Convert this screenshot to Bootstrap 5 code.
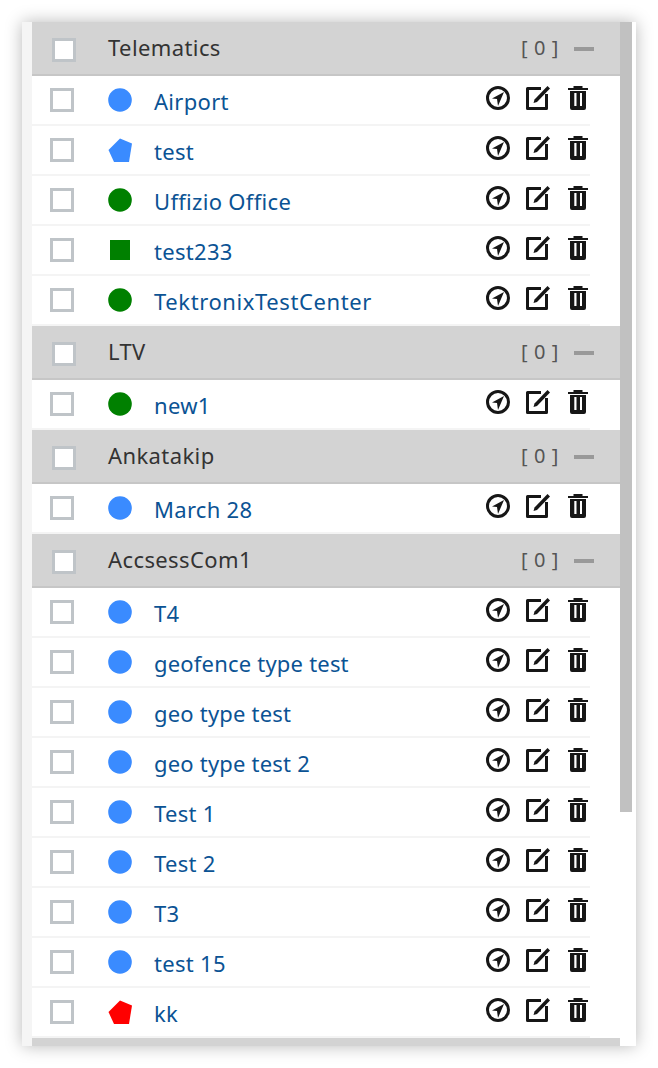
<!DOCTYPE html>
<html lang="en"><head><meta charset="utf-8"><title>Geofences</title>
<link href="https://cdn.jsdelivr.net/npm/bootstrap@5.3.0/dist/css/bootstrap.min.css" rel="stylesheet">
<style>
html,body{height:1068px;overflow:hidden;background:#fff}
body{font-family:"Noto Sans","Open Sans",sans-serif;font-size:22px;letter-spacing:.3px;padding:22px}
.geo-panel{width:614px;height:1024px;padding-left:10px;background:#f5f5f5;box-shadow:0 0 16px rgba(0,0,0,.28);overflow:hidden}
.geo-inner{background:#fff;height:100%}
.geo-list{width:588px;height:100%;background:#d3d3d3}
.geo-scroll{width:12px;height:790px;background:#c1c1c1}
.geo-head{height:54px;background:#d3d3d3;border-bottom:2px solid #c6c6c6;color:#333}
.geo-check{width:24px;height:24px;border:3px solid #bfc4c8;background:#fff;flex:none}
.geo-head .geo-check{margin-left:20px;margin-top:4px}
.geo-name{margin-left:32px;margin-top:-2px;letter-spacing:.4px}
.geo-count{color:#555;letter-spacing:.6px;margin-top:0;font-size:20px}
.geo-dash{width:20px;height:4px;background:#999;margin:2px 26px 0 15px;flex:none}
.geo-row{height:50px;background:#fff;width:100%}
.geo-rowin{width:558px;height:50px;border-bottom:2px solid #f4f4f4}
.geo-rowin>.geo-check{margin-left:18px}
.geo-shape{width:24px;height:24px;margin-left:34px;flex:none;display:block}
.geo-link{color:#0b5394;margin-left:22px;margin-top:2px;text-decoration:none}
.geo-tools{margin-left:auto;gap:16px;margin-top:-4px}
.geo-tools svg{width:24px;height:24px;display:block;color:#161616}
.geo-wide{letter-spacing:.6px}
.geo-tight{letter-spacing:.2px}
</style></head><body>
<svg width="0" height="0" class="position-absolute">
<defs>
<symbol id="i-nav" viewBox="0 0 24 24"><circle cx="12" cy="12" r="10.500" fill="none" stroke="currentColor" stroke-width="3"/><path d="M18 6 6 12.500 11 13 12 20z" fill="currentColor"/></symbol>
<symbol id="i-edit" viewBox="0 0 24 24"><path d="M15 2.500H1.500V22.500H20.500V8" fill="none" stroke="currentColor" stroke-width="3" stroke-linejoin="round"/><path d="M21.500 0 24 2.500 11 16 7.500 17 8.500 13.500z" fill="currentColor"/></symbol>
<symbol id="i-del" viewBox="0 0 24 24"><path d="M2 2H7.500V0H16.500V2H22V4H2z" fill="currentColor"/><path fill-rule="evenodd" d="M4 5H20V22A2 2 0 0 1 18 24H6A2 2 0 0 1 4 22zM8.300 7V20H10.500V7zM14 7V20H16V7z" fill="currentColor"/></symbol>
<symbol id="s-c-b" viewBox="0 0 24 24"><circle cx="12" cy="12" r="11.800" fill="#3a8bff"/></symbol>
<symbol id="s-c-g" viewBox="0 0 24 24"><circle cx="12" cy="12" r="11.800" fill="#008000"/></symbol>
<symbol id="s-sq" viewBox="0 0 24 24"><rect x="2" y="2" width="20" height="20" fill="#008000"/></symbol>
<symbol id="s-p-b" viewBox="0 0 24 24"><path d="M12 .5 24 5.500 21 24 6 24 .5 12z" fill="#3a8bff"/></symbol>
<symbol id="s-p-r" viewBox="0 0 24 24"><path d="M12 .5 24 5.500 21 24 6 24 .5 12z" fill="#ff0000"/></symbol>
</defs></svg>
<div class="geo-panel"><div class="geo-inner d-flex">
<div class="geo-list">

<div class="geo-head d-flex align-items-center"><span class="geo-check"></span><span class="geo-name">Telematics</span><span class="geo-count ms-auto">[ 0 ]</span><span class="geo-dash"></span></div>
<div class="geo-row"><div class="geo-rowin d-flex align-items-center"><span class="geo-check"></span><svg class="geo-shape"><use href="#s-c-b"/></svg><a class="geo-link" href="#">Airport</a><div class="geo-tools d-flex"><svg><use href="#i-nav"/></svg><svg><use href="#i-edit"/></svg><svg><use href="#i-del"/></svg></div></div></div>
<div class="geo-row"><div class="geo-rowin d-flex align-items-center"><span class="geo-check"></span><svg class="geo-shape"><use href="#s-p-b"/></svg><a class="geo-link" href="#">test</a><div class="geo-tools d-flex"><svg><use href="#i-nav"/></svg><svg><use href="#i-edit"/></svg><svg><use href="#i-del"/></svg></div></div></div>
<div class="geo-row"><div class="geo-rowin d-flex align-items-center"><span class="geo-check"></span><svg class="geo-shape"><use href="#s-c-g"/></svg><a class="geo-link" href="#">Uffizio Office</a><div class="geo-tools d-flex"><svg><use href="#i-nav"/></svg><svg><use href="#i-edit"/></svg><svg><use href="#i-del"/></svg></div></div></div>
<div class="geo-row"><div class="geo-rowin d-flex align-items-center"><span class="geo-check"></span><svg class="geo-shape"><use href="#s-sq"/></svg><a class="geo-link" href="#">test233</a><div class="geo-tools d-flex"><svg><use href="#i-nav"/></svg><svg><use href="#i-edit"/></svg><svg><use href="#i-del"/></svg></div></div></div>
<div class="geo-row"><div class="geo-rowin d-flex align-items-center"><span class="geo-check"></span><svg class="geo-shape"><use href="#s-c-g"/></svg><a class="geo-link geo-wide" href="#">TektronixTestCenter</a><div class="geo-tools d-flex"><svg><use href="#i-nav"/></svg><svg><use href="#i-edit"/></svg><svg><use href="#i-del"/></svg></div></div></div>

<div class="geo-head d-flex align-items-center"><span class="geo-check"></span><span class="geo-name">LTV</span><span class="geo-count ms-auto">[ 0 ]</span><span class="geo-dash"></span></div>
<div class="geo-row"><div class="geo-rowin d-flex align-items-center"><span class="geo-check"></span><svg class="geo-shape"><use href="#s-c-g"/></svg><a class="geo-link" href="#">new1</a><div class="geo-tools d-flex"><svg><use href="#i-nav"/></svg><svg><use href="#i-edit"/></svg><svg><use href="#i-del"/></svg></div></div></div>

<div class="geo-head d-flex align-items-center"><span class="geo-check"></span><span class="geo-name">Ankatakip</span><span class="geo-count ms-auto">[ 0 ]</span><span class="geo-dash"></span></div>
<div class="geo-row"><div class="geo-rowin d-flex align-items-center"><span class="geo-check"></span><svg class="geo-shape"><use href="#s-c-b"/></svg><a class="geo-link" href="#">March 28</a><div class="geo-tools d-flex"><svg><use href="#i-nav"/></svg><svg><use href="#i-edit"/></svg><svg><use href="#i-del"/></svg></div></div></div>

<div class="geo-head d-flex align-items-center"><span class="geo-check"></span><span class="geo-name">AccsessCom1</span><span class="geo-count ms-auto">[ 0 ]</span><span class="geo-dash"></span></div>
<div class="geo-row"><div class="geo-rowin d-flex align-items-center"><span class="geo-check"></span><svg class="geo-shape"><use href="#s-c-b"/></svg><a class="geo-link" href="#">T4</a><div class="geo-tools d-flex"><svg><use href="#i-nav"/></svg><svg><use href="#i-edit"/></svg><svg><use href="#i-del"/></svg></div></div></div>
<div class="geo-row"><div class="geo-rowin d-flex align-items-center"><span class="geo-check"></span><svg class="geo-shape"><use href="#s-c-b"/></svg><a class="geo-link geo-tight" href="#">geofence type test</a><div class="geo-tools d-flex"><svg><use href="#i-nav"/></svg><svg><use href="#i-edit"/></svg><svg><use href="#i-del"/></svg></div></div></div>
<div class="geo-row"><div class="geo-rowin d-flex align-items-center"><span class="geo-check"></span><svg class="geo-shape"><use href="#s-c-b"/></svg><a class="geo-link geo-tight" href="#">geo type test</a><div class="geo-tools d-flex"><svg><use href="#i-nav"/></svg><svg><use href="#i-edit"/></svg><svg><use href="#i-del"/></svg></div></div></div>
<div class="geo-row"><div class="geo-rowin d-flex align-items-center"><span class="geo-check"></span><svg class="geo-shape"><use href="#s-c-b"/></svg><a class="geo-link geo-tight" href="#">geo type test 2</a><div class="geo-tools d-flex"><svg><use href="#i-nav"/></svg><svg><use href="#i-edit"/></svg><svg><use href="#i-del"/></svg></div></div></div>
<div class="geo-row"><div class="geo-rowin d-flex align-items-center"><span class="geo-check"></span><svg class="geo-shape"><use href="#s-c-b"/></svg><a class="geo-link" href="#">Test 1</a><div class="geo-tools d-flex"><svg><use href="#i-nav"/></svg><svg><use href="#i-edit"/></svg><svg><use href="#i-del"/></svg></div></div></div>
<div class="geo-row"><div class="geo-rowin d-flex align-items-center"><span class="geo-check"></span><svg class="geo-shape"><use href="#s-c-b"/></svg><a class="geo-link" href="#">Test 2</a><div class="geo-tools d-flex"><svg><use href="#i-nav"/></svg><svg><use href="#i-edit"/></svg><svg><use href="#i-del"/></svg></div></div></div>
<div class="geo-row"><div class="geo-rowin d-flex align-items-center"><span class="geo-check"></span><svg class="geo-shape"><use href="#s-c-b"/></svg><a class="geo-link" href="#">T3</a><div class="geo-tools d-flex"><svg><use href="#i-nav"/></svg><svg><use href="#i-edit"/></svg><svg><use href="#i-del"/></svg></div></div></div>
<div class="geo-row"><div class="geo-rowin d-flex align-items-center"><span class="geo-check"></span><svg class="geo-shape"><use href="#s-c-b"/></svg><a class="geo-link" href="#">test 15</a><div class="geo-tools d-flex"><svg><use href="#i-nav"/></svg><svg><use href="#i-edit"/></svg><svg><use href="#i-del"/></svg></div></div></div>
<div class="geo-row"><div class="geo-rowin d-flex align-items-center"><span class="geo-check"></span><svg class="geo-shape"><use href="#s-p-r"/></svg><a class="geo-link" href="#">kk</a><div class="geo-tools d-flex"><svg><use href="#i-nav"/></svg><svg><use href="#i-edit"/></svg><svg><use href="#i-del"/></svg></div></div></div>
</div>
<div class="geo-scroll"></div>
</div></div>
</body></html>
